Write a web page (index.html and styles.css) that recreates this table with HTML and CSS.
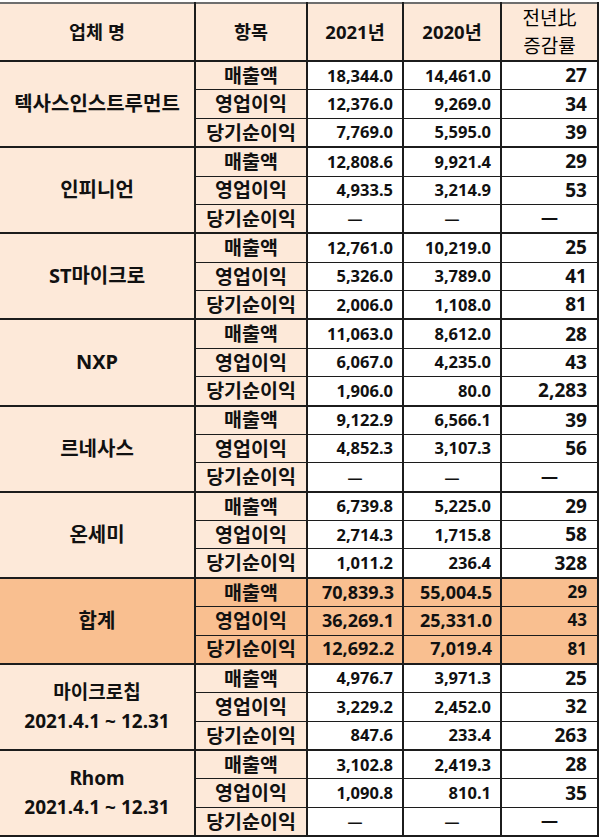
FILE: index.html
```html
<!DOCTYPE html>
<html lang="ko">
<head>
<meta charset="utf-8">
<title>반도체 업체 실적</title>
<link rel="stylesheet" href="styles.css">
</head>
<body>
<table class="t">
<colgroup><col class="c1"><col class="c2"><col class="c3"><col class="c4"><col class="c5"></colgroup>
<thead>
<tr><th>업체 명</th><th>항목</th><th>2021년</th><th>2020년</th><th class="rate">전년比<br>증감률</th></tr>
</thead>
<tbody>
<tr class="g"><td rowspan="3" class="co">텍사스인스트루먼트</td><td class="it">매출액</td><td class="n">18,344.0</td><td class="n">14,461.0</td><td class="p">27</td></tr>
<tr><td class="it">영업이익</td><td class="n">12,376.0</td><td class="n">9,269.0</td><td class="p">34</td></tr>
<tr><td class="it">당기순이익</td><td class="n">7,769.0</td><td class="n">5,595.0</td><td class="p">39</td></tr>

<tr class="g"><td rowspan="3" class="co">인피니언</td><td class="it">매출액</td><td class="n">12,808.6</td><td class="n">9,921.4</td><td class="p">29</td></tr>
<tr><td class="it">영업이익</td><td class="n">4,933.5</td><td class="n">3,214.9</td><td class="p">53</td></tr>
<tr><td class="it">당기순이익</td><td class="d">—</td><td class="d">—</td><td class="d dp">—</td></tr>

<tr class="g"><td rowspan="3" class="co">ST마이크로</td><td class="it">매출액</td><td class="n">12,761.0</td><td class="n">10,219.0</td><td class="p">25</td></tr>
<tr><td class="it">영업이익</td><td class="n">5,326.0</td><td class="n">3,789.0</td><td class="p">41</td></tr>
<tr><td class="it">당기순이익</td><td class="n">2,006.0</td><td class="n">1,108.0</td><td class="p">81</td></tr>

<tr class="g"><td rowspan="3" class="co">NXP</td><td class="it">매출액</td><td class="n">11,063.0</td><td class="n">8,612.0</td><td class="p">28</td></tr>
<tr><td class="it">영업이익</td><td class="n">6,067.0</td><td class="n">4,235.0</td><td class="p">43</td></tr>
<tr><td class="it">당기순이익</td><td class="n">1,906.0</td><td class="n">80.0</td><td class="p">2,283</td></tr>

<tr class="g"><td rowspan="3" class="co">르네사스</td><td class="it">매출액</td><td class="n">9,122.9</td><td class="n">6,566.1</td><td class="p">39</td></tr>
<tr><td class="it">영업이익</td><td class="n">4,852.3</td><td class="n">3,107.3</td><td class="p">56</td></tr>
<tr><td class="it">당기순이익</td><td class="d">—</td><td class="d">—</td><td class="d dp">—</td></tr>

<tr class="g"><td rowspan="3" class="co">온세미</td><td class="it">매출액</td><td class="n">6,739.8</td><td class="n">5,225.0</td><td class="p">29</td></tr>
<tr><td class="it">영업이익</td><td class="n">2,714.3</td><td class="n">1,715.8</td><td class="p">58</td></tr>
<tr><td class="it">당기순이익</td><td class="n">1,011.2</td><td class="n">236.4</td><td class="p">328</td></tr>

<tr class="g sum"><td rowspan="3" class="co">합계</td><td class="it">매출액</td><td class="n">70,839.3</td><td class="n">55,004.5</td><td class="p">29</td></tr>
<tr class="sum"><td class="it">영업이익</td><td class="n">36,269.1</td><td class="n">25,331.0</td><td class="p">43</td></tr>
<tr class="sum"><td class="it">당기순이익</td><td class="n">12,692.2</td><td class="n">7,019.4</td><td class="p">81</td></tr>

<tr class="g"><td rowspan="3" class="co two">마이크로칩<br>2021.4.1 ~ 12.31</td><td class="it">매출액</td><td class="n">4,976.7</td><td class="n">3,971.3</td><td class="p">25</td></tr>
<tr><td class="it">영업이익</td><td class="n">3,229.2</td><td class="n">2,452.0</td><td class="p">32</td></tr>
<tr><td class="it">당기순이익</td><td class="n">847.6</td><td class="n">233.4</td><td class="p">263</td></tr>

<tr class="g"><td rowspan="3" class="co two">Rhom<br>2021.4.1 ~ 12.31</td><td class="it">매출액</td><td class="n">3,102.8</td><td class="n">2,419.3</td><td class="p">28</td></tr>
<tr><td class="it">영업이익</td><td class="n">1,090.8</td><td class="n">810.1</td><td class="p">35</td></tr>
<tr><td class="it">당기순이익</td><td class="d">—</td><td class="d">—</td><td class="d dp">—</td></tr>
</tbody>
</table>
</body>
</html>
```

FILE: styles.css
```css
html, body {
  margin: 0;
  padding: 0;
  background: #fff;
}
body {
  font-family: "Noto Sans", "Noto Sans CJK KR", sans-serif;
  color: #111;
}
.t {
  border-collapse: collapse;
  table-layout: fixed;
  width: 598px;
  margin-top: 2px;
  border-top: 2px solid #6e6e6e;
  border-right: 2px solid #1c1c1c;
  border-bottom: 2px solid #1c1c1c;
}
.c1 { width: 195px; }
.c2 { width: 112px; }
.c3 { width: 96px; }
.c4 { width: 98px; }
.c5 { width: 97px; }

th {
  background: #fde9d9;
  font-family: "Noto Sans", "Noto Sans CJK KR", sans-serif;
  font-weight: 700;
  font-size: 18.5px;
  height: 53px;
  padding: 0;
  line-height: 28px;
  border-bottom: 2px solid #1c1c1c;
  border-left: 2px solid #1c1c1c;
}
th:first-child { border-left: none; }
th.rate { font-weight: 400; font-size: 19px; color: #000; }

td {
  height: 27.38px;
  padding: 0;
  line-height: 1.1;
  border-top: 1px solid #1c1c1c;
  border-bottom: 1px solid #1c1c1c;
  border-left: 2px solid #1c1c1c;
  border-right: 2px solid #1c1c1c;
  background: #fff;
  white-space: nowrap;
}
tr.g td { border-top: 2px solid #1c1c1c; }

td.co, td.it {
  background: #fde9d9;
  text-align: center;
  font-weight: 700;
  font-size: 19.5px;
}
td.co { border-left: none; font-size: 20px; }
td.co.two {
  font-size: 19px;
  line-height: 29px;
}
td.n {
  text-align: right;
  padding-right: 9px;
  font-weight: 700;
  font-size: 16.5px;
}
td.p {
  text-align: right;
  padding-right: 10px;
  font-weight: 700;
  font-size: 19px;
}
td.d {
  text-align: center;
  font-weight: 700;
  font-size: 15px;
}
td.dp { font-size: 17px; }

tr.sum td { background: #f9bf90; }
tr.sum td.n { font-size: 18px; padding-right: 8px; }
tr.sum td.p { font-size: 17px; }
```
